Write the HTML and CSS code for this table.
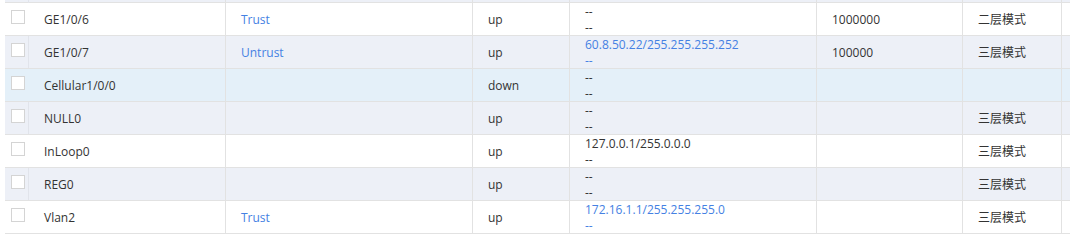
FILE: index.html
```html
<!DOCTYPE html>
<html lang="zh-CN">
<head>
<meta charset="utf-8">
<title>接口列表</title>
<link rel="stylesheet" href="styles.css">
</head>
<body>
<div class="table">
  <div class="row alt strip">
    <div class="cell c0"></div><div class="cell"></div><div class="cell"></div><div class="cell"></div><div class="cell"></div><div class="cell"></div><div class="cell"></div><div class="cell"></div>
  </div>

  <div class="row">
    <div class="cell c0"><span class="check"></span></div>
    <div class="cell">GE1/0/6</div>
    <div class="cell"><span class="link">Trust</span></div>
    <div class="cell">up</div>
    <div class="cell two"><span>--</span><span>--</span></div>
    <div class="cell">1000000</div>
    <div class="cell">二层模式</div>
    <div class="cell"></div>
  </div>

  <div class="row alt">
    <div class="cell c0"><span class="check"></span></div>
    <div class="cell">GE1/0/7</div>
    <div class="cell"><span class="link">Untrust</span></div>
    <div class="cell">up</div>
    <div class="cell two link"><span>60.8.50.22/255.255.255.252</span><span>--</span></div>
    <div class="cell">100000</div>
    <div class="cell">三层模式</div>
    <div class="cell"></div>
  </div>

  <div class="row hover">
    <div class="cell c0"><span class="check"></span></div>
    <div class="cell">Cellular1/0/0</div>
    <div class="cell"></div>
    <div class="cell">down</div>
    <div class="cell two"><span>--</span><span>--</span></div>
    <div class="cell"></div>
    <div class="cell"></div>
    <div class="cell"></div>
  </div>

  <div class="row alt">
    <div class="cell c0"><span class="check"></span></div>
    <div class="cell">NULL0</div>
    <div class="cell"></div>
    <div class="cell">up</div>
    <div class="cell two"><span>--</span><span>--</span></div>
    <div class="cell"></div>
    <div class="cell">三层模式</div>
    <div class="cell"></div>
  </div>

  <div class="row">
    <div class="cell c0"><span class="check"></span></div>
    <div class="cell">InLoop0</div>
    <div class="cell"></div>
    <div class="cell">up</div>
    <div class="cell two"><span>127.0.0.1/255.0.0.0</span><span>--</span></div>
    <div class="cell"></div>
    <div class="cell">三层模式</div>
    <div class="cell"></div>
  </div>

  <div class="row alt">
    <div class="cell c0"><span class="check"></span></div>
    <div class="cell">REG0</div>
    <div class="cell"></div>
    <div class="cell">up</div>
    <div class="cell two"><span>--</span><span>--</span></div>
    <div class="cell"></div>
    <div class="cell">三层模式</div>
    <div class="cell"></div>
  </div>

  <div class="row">
    <div class="cell c0"><span class="check"></span></div>
    <div class="cell">Vlan2</div>
    <div class="cell"><span class="link">Trust</span></div>
    <div class="cell">up</div>
    <div class="cell two link"><span>172.16.1.1/255.255.255.0</span><span>--</span></div>
    <div class="cell"></div>
    <div class="cell">三层模式</div>
    <div class="cell"></div>
  </div>
</div>
</body>
</html>
```

FILE: styles.css
```css
html, body {
  margin: 0;
  padding: 0;
  background: #ffffff;
}

body {
  font-family: "Open Sans", "Noto Sans CJK SC", sans-serif;
  font-size: 12px;
  color: #333333;
  overflow: hidden;
}

.table {
  padding-left: 5px;
}

.row {
  display: grid;
  grid-template-columns: 23px 197px 247px 97px 247px 146px 99px 1fr;
  height: 33px;
  box-sizing: border-box;
  border-bottom: 1px solid #e2e2e2;
  background: #ffffff;
}

.row.alt {
  background: #edf0f7;
}

.row.hover {
  background: #e4f0f9;
}

.row.strip {
  height: 3px;
}

.cell {
  box-sizing: border-box;
  border-left: 1px solid #e2e2e2;
  padding-left: 15px;
  padding-top: 1px;
  display: flex;
  align-items: center;
  white-space: nowrap;
  overflow: hidden;
  line-height: 16px;
}

.cell.c0 {
  border-left: none;
  padding-left: 6px;
  align-items: flex-start;
  padding-top: 7px;
}

.row .cell:nth-child(2) {
  border-left-color: #ffffff;
}

.row.alt .cell:nth-child(2) {
  border-left-color: #e1e4eb;
}

.row.hover .cell:nth-child(2) {
  border-left-color: #e4f0f9;
}

.cell.two {
  flex-direction: column;
  align-items: flex-start;
  justify-content: center;
}

.check {
  display: block;
  width: 14px;
  height: 14px;
  box-sizing: border-box;
  border: 1px solid #d4d4d4;
  background: #ffffff;
}

.link {
  color: #4581e3;
}
```
